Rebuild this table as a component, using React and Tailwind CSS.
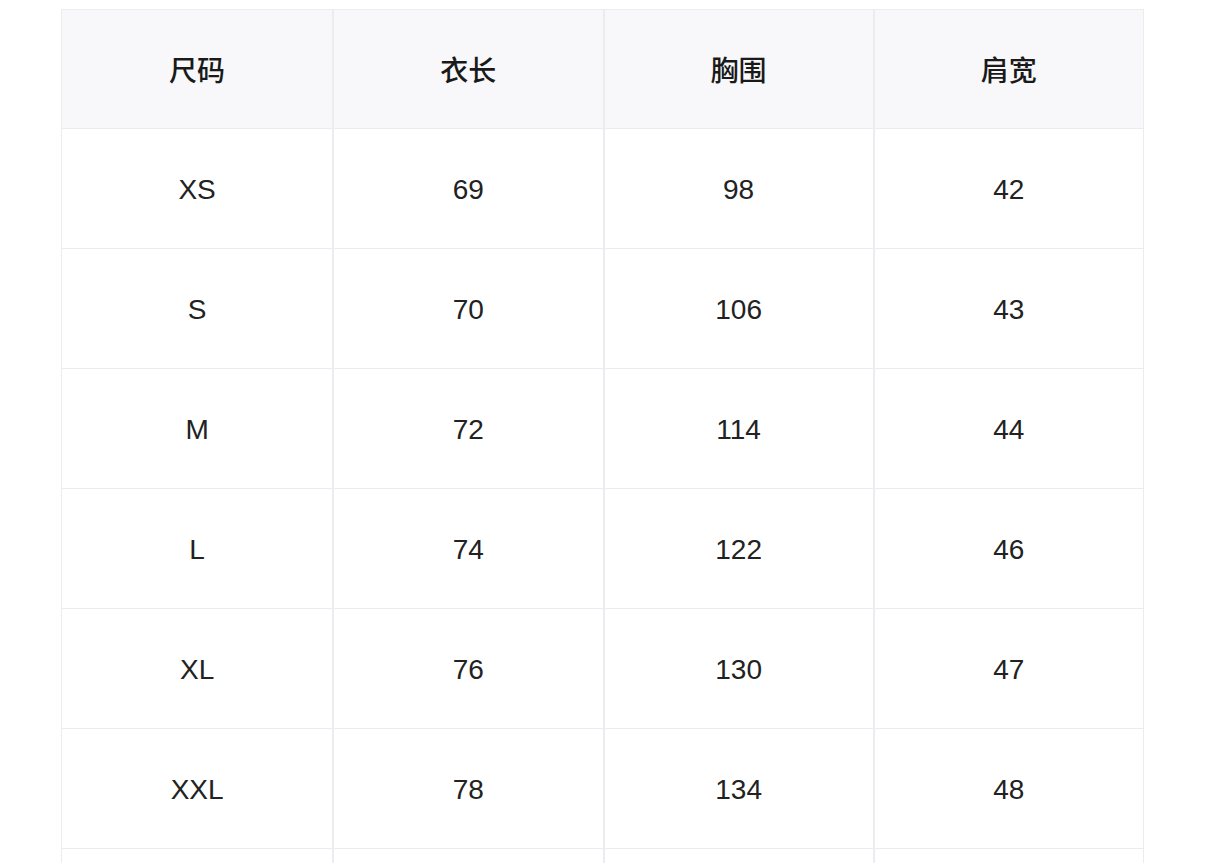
import React from 'react';

const headers = ['尺码', '衣长', '胸围', '肩宽'];

const rows = [
  ['XS', '69', '98', '42'],
  ['S', '70', '106', '43'],
  ['M', '72', '114', '44'],
  ['L', '74', '122', '46'],
  ['XL', '76', '130', '47'],
  ['XXL', '78', '134', '48'],
];

const App = () => {
  return (
    <div
      className="bg-white h-screen overflow-hidden pt-[9px] pl-[61px]"
      style={{ fontFamily: '"Liberation Sans", "Noto Sans CJK SC", sans-serif' }}
    >
      <div className="w-[1083px] border border-[#ececf0]">
        <div className="grid grid-cols-4 h-[119px] bg-[#f8f8fa] border-b border-[#ececf0]">
          {headers.map((h, i) => (
            <div
              key={h}
              className={`flex items-center justify-center pt-[5px] text-[28px] font-medium text-[#1a1a1a] ${i > 0 ? 'border-l-2 border-[#ececf0]' : ''}`}
            >
              {h}
            </div>
          ))}
        </div>
        {rows.map((r) => (
          <div key={r[0]} className="grid grid-cols-4 h-[120px] border-b border-[#ececf0]">
            {r.map((c, i) => (
              <div
                key={i}
                className={`flex items-center justify-center pt-[3px] text-[28px] text-[#222222] ${i > 0 ? 'border-l-2 border-[#ececf0]' : ''}`}
              >
                {c}
              </div>
            ))}
          </div>
        ))}
        {/* next row is cut off by the bottom of the frame */}
        <div className="grid grid-cols-4 h-[40px]">
          {headers.map((h, i) => (
            <div key={h} className={i > 0 ? 'border-l-2 border-[#ececf0]' : ''} />
          ))}
        </div>
      </div>
    </div>
  );
};

export default App;
